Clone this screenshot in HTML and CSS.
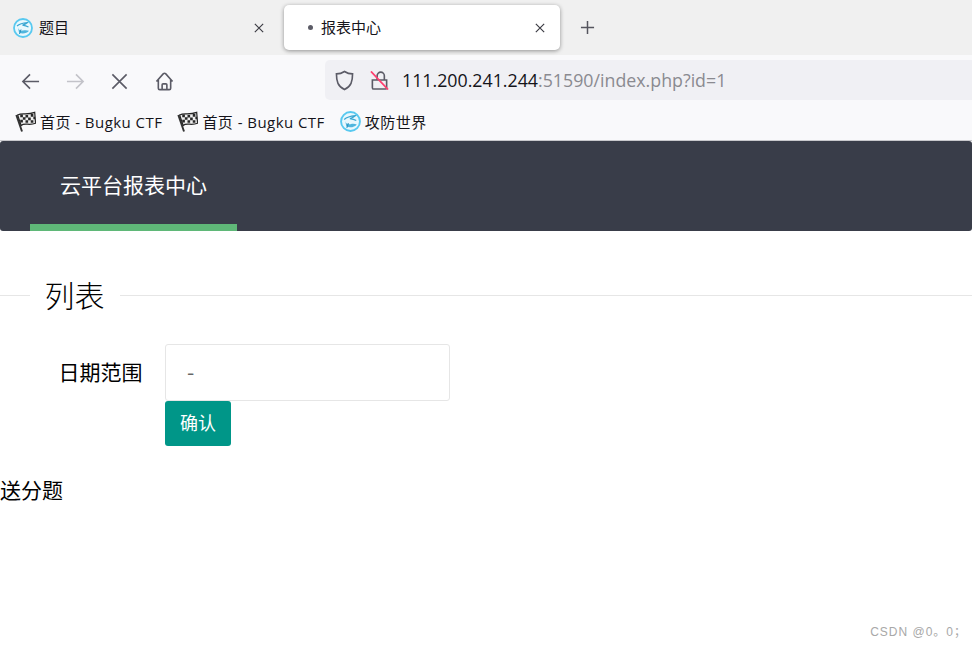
FILE: index.html
```html
<!DOCTYPE html>
<html lang="zh-CN">
<head>
<meta charset="utf-8">
<title>报表中心</title>
<link rel="stylesheet" href="styles.css">
</head>
<body>
<svg class="defs" width="0" height="0" aria-hidden="true">
  <defs>
    <symbol id="globe" viewBox="0 0 20 20">
      <circle cx="10" cy="10" r="9" fill="#e9f8fd" stroke="#58c9f0" stroke-width="1.800"/>
      <path d="M4 8C7 5.500 10 5 14.500 4.500C13 6 11.500 6.500 9.500 7.200C11.500 7.500 13.500 8 15.500 9" fill="none" stroke="#3aa6d2" stroke-width="1.200"/>
      <path d="M5 9.500C5.500 12 7.500 13 10 12.500C12 12 14 12 16 12.800C14 15.500 9 16.500 6 14.500Z" fill="#4fb6de"/>
      <path d="M8 11.500L6.500 16" fill="none" stroke="#2a8fbc" stroke-width="1"/>
    </symbol>
    <symbol id="flag" viewBox="0 0 24 24">
      <path d="M1.500 4.500L8 23.500" fill="none" stroke="#333" stroke-width="2.200"/>
      <path d="M3 4.500C8 1.500 13 5 22.500 1.500L23.500 14C16 17 11 13 7 16.500Z" fill="#efefef" stroke="#262626" stroke-width="1.400"/>
      <path d="M6 4h3v3H6zM12 4.500h3v3h-3zM18 3.500h3v3h-3zM9 7h3v3H9zM15 7.500h3v3h-3zM21 6.500h2v3h-2zM6 10h3v3H6zM12 10.500h3v3h-3zM18 10.500h3v3h-3z" fill="#262626"/>
    </symbol>
  </defs>
</svg>

<header class="chrome">
  <div class="tabstrip">
    <div class="tab">
      <svg class="favicon"><use href="#globe"/></svg>
      <span class="tab-title">题目</span>
      <svg class="tab-close" viewBox="0 0 12 12"><path d="M1 1l10 10M11 1L1 11"/></svg>
    </div>
    <div class="tab tab-active">
      <span class="tab-dot"></span>
      <span class="tab-title">报表中心</span>
      <svg class="tab-close" viewBox="0 0 12 12"><path d="M1 1l10 10M11 1L1 11"/></svg>
    </div>
    <svg class="new-tab" viewBox="0 0 16 16"><path d="M8 1v14M1 8h14"/></svg>
  </div>

  <div class="toolbar">
    <div class="nav-buttons">
      <svg class="tool" viewBox="0 0 20 20"><path d="M19 10H2M9.500 2.500L2 10l7.500 7.500"/></svg>
      <svg class="tool tool-off" viewBox="0 0 20 20"><path d="M1 10h17M10.500 2.500L18 10l-7.500 7.500"/></svg>
      <svg class="tool" viewBox="0 0 20 20"><path d="M2.500 2.500l15 15M17.500 2.500l-15 15"/></svg>
      <svg class="tool" viewBox="0 0 20 20"><path d="M1.500 10L8.600 2a2 2 0 0 1 2.800 0L18.500 10M3.500 8v9a1.500 1.500 0 0 0 1.500 1.500h10a1.500 1.500 0 0 0 1.500-1.500V8M7.500 18.500V13.500a1 1 0 0 1 1-1h3a1 1 0 0 1 1 1v5"/></svg>
    </div>
    <div class="urlbar">
      <svg class="shield" viewBox="0 0 20 22"><path d="M10 1.500C7 3.500 5 4 1.500 4c0 8 1.500 13 8.500 16.500C17 17 18.500 12 18.500 4 15 4 13 3.500 10 1.500Z"/></svg>
      <svg class="lock" viewBox="0 0 20 20">
        <path class="lock-body" d="M7.500 9.500V5a3.800 3.800 0 0 1 7.600 0V9.500M2.500 9.500h15v8a1.500 1.500 0 0 1-1.500 1.500H4a1.500 1.500 0 0 1-1.500-1.500z"/>
        <path class="lock-slash" d="M1 .5L19 19.500"/>
      </svg>
      <span class="url"><span class="url-host">111.200.241.244</span>:51590/index.php?id=1</span>
    </div>
  </div>

  <div class="bookmarks">
    <span class="bookmark"><svg class="bm-icon"><use href="#flag"/></svg>首页 - Bugku CTF</span>
    <span class="bookmark"><svg class="bm-icon"><use href="#flag"/></svg>首页 - Bugku CTF</span>
    <span class="bookmark"><svg class="bm-icon"><use href="#globe"/></svg>攻防世界</span>
  </div>
</header>

<nav class="site-nav">
  <a class="nav-item">云平台报表中心</a>
</nav>

<main>
  <div class="legend">
    <span class="legend-line legend-line-start"></span>
    <h2 class="legend-title">列表</h2>
    <span class="legend-line"></span>
  </div>

  <form class="filter">
    <label class="filter-label">日期范围</label>
    <div class="filter-fields">
      <div class="date-input">-</div>
      <button class="confirm" type="button">确认</button>
    </div>
  </form>

  <p class="note">送分题</p>
</main>

<div class="watermark">CSDN @0。0；</div>
</body>
</html>
```
FILE: styles.css
```css
* { box-sizing: border-box; }
html, body { margin: 0; height: 648px; overflow: hidden; }
body {
  position: relative;
  background: #fff;
  color: #000;
  font-family: "Noto Sans CJK SC", sans-serif;
}
.defs { position: absolute; }

.chrome { font-family: "Open Sans", "Noto Sans CJK SC", sans-serif; }
.tabstrip {
  display: flex;
  align-items: center;
  height: 55px;
  background: #f0f0f0;
}
.tab {
  display: flex;
  align-items: center;
  width: 284px;
  height: 45px;
  padding: 0 20px 0 13px;
  font-size: 15px;
}
.tab-active {
  width: 276px;
  padding: 0 15px 0 24px;
  background: #fff;
  border-radius: 5px;
  box-shadow: 0 1px 4px rgba(0, 0, 0, .4);
}
.favicon { width: 20px; height: 20px; margin-right: 6px; flex: none; }
.tab-dot {
  width: 5px; height: 5px;
  margin-right: 8px;
  border-radius: 50%;
  background: #5b5b66;
  flex: none;
}
.tab-title { flex: 1; padding-bottom: 3px; color: #15141a; white-space: nowrap; }
.tab-close {
  width: 10px; height: 10px;
  fill: none; stroke: #3c3c44; stroke-width: 1.4;
  flex: none;
}
.new-tab {
  width: 15px; height: 15px;
  margin-left: 20px;
  fill: none; stroke: #55555e; stroke-width: 1.6;
}

.toolbar {
  display: flex;
  align-items: center;
  height: 50px;
  background: #f9f9fb;
}
.nav-buttons {
  display: flex;
  align-items: center;
  gap: 25.500px;
  width: 325px;
  padding: 2px 0 0 21px;
}
.tool {
  width: 19px; height: 19px;
  fill: none; stroke: #5b5b66; stroke-width: 1.7;
  flex: none;
}
.tool-off { stroke: #c3c3c9; }
.urlbar {
  flex: 1;
  display: flex;
  align-items: center;
  height: 40px;
  padding-left: 10px;
  background: #f0f0f4;
  border-radius: 5px 0 0 5px;
}
.shield {
  width: 19px; height: 21px;
  margin-top: 1px;
  fill: none; stroke: #5b5b66; stroke-width: 1.7;
}
.lock { width: 19px; height: 19px; margin: 1px 0 0 16px; fill: none; }
.lock-body { stroke: #5b5b66; stroke-width: 1.7; }
.lock-slash { stroke: #ff3f70; stroke-width: 1.9; }
.url {
  margin-left: 13px;
  font-family: "Open Sans", sans-serif;
  font-size: 17.800px;
  color: #8a8a90;
  white-space: nowrap;
}
.url-host { color: #15141a; }

.bookmarks {
  display: flex;
  align-items: center;
  gap: 15px;
  height: 36px;
  padding: 0 0 3px 15px;
  background: #f9f9fb;
  border-bottom: 1px solid #c8c8cc;
  font-size: 15px;
  letter-spacing: .45px;
  color: #15141a;
}
.bookmark { display: flex; align-items: center; white-space: nowrap; }
.bm-icon { width: 21px; height: 21px; margin-right: 4px; flex: none; }

.site-nav {
  display: flex;
  height: 90px;
  padding-left: 30px;
  background: #393d49;
  border-radius: 3px;
}
.nav-item {
  width: 207px;
  padding-left: 30px;
  line-height: 86px;
  font-size: 21px;
  color: #fff;
  border-bottom: 7px solid #5fb878;
}

.legend {
  display: flex;
  align-items: center;
  height: 44px;
  margin-top: 42px;
}
.legend-line { flex: 1; height: 1px; background: #e6e6e6; }
.legend-line-start { flex: 0 0 30px; }
.legend-title {
  margin: 0;
  padding: 0 15.500px 2px 14.500px;
  font-size: 30px;
  font-weight: 300;
  line-height: 42px;
}

.filter {
  display: flex;
  margin-top: 27px;
}
.filter-label {
  width: 165px;
  padding: 0 22px 0 58.500px;
  font-size: 21px;
  line-height: 55px;
  white-space: nowrap;
}
.filter-fields { display: flex; flex-direction: column; align-items: flex-start; }
.date-input {
  width: 285px;
  height: 57px;
  padding-left: 21px;
  border: 1px solid #e6e6e6;
  border-radius: 3px;
  font-size: 21px;
  line-height: 53px;
  color: #666;
}
.confirm {
  width: 66px;
  height: 45px;
  padding: 0 0 3px;
  border: 0;
  border-radius: 3px;
  background: #009688;
  color: #fff;
  font-family: inherit;
  font-size: 18px;
}

.note {
  margin: 25px 0 0;
  font-size: 21px;
  line-height: 36px;
}

.watermark {
  position: absolute;
  right: 5px;
  bottom: 9px;
  font-family: "Liberation Sans", "Noto Sans CJK SC", sans-serif;
  font-size: 12px;
  letter-spacing: 1px;
  color: #a8a8a8;
}
```
